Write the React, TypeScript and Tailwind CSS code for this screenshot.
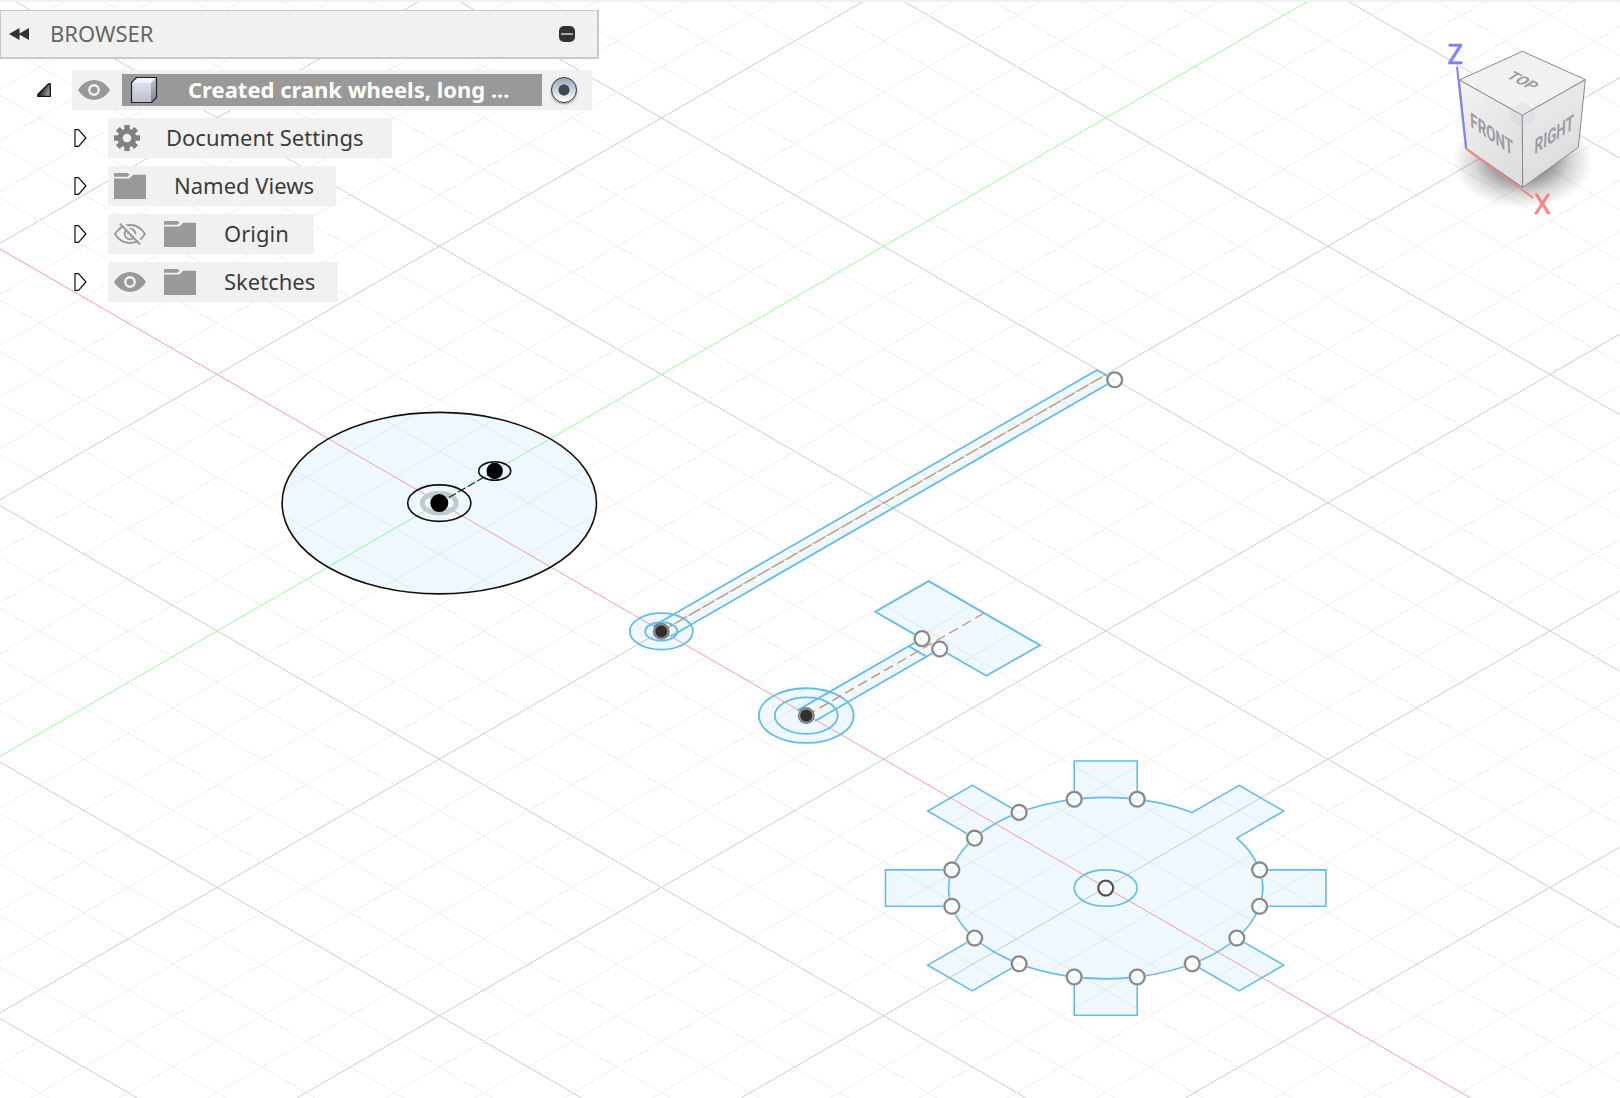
import type { ReactNode } from "react";

const S = Math.tan(Math.PI / 6);
const ORIGIN = { x: 439.3, y: 501.7 };
const STEP = 51.3;

/* ---------- sketch canvas ---------- */

function Grid() {
  const lines: ReactNode[] = [];
  for (let k = -50; k <= 50; k++) {
    if (k === 0) continue;
    for (const dir of [1, -1]) {
      const c = ORIGIN.y + k * STEP - dir * S * ORIGIN.x;
      lines.push(
        <line
          key={`${k}:${dir}`}
          x1={-10}
          y1={c - dir * S * 10}
          x2={3000}
          y2={c + dir * S * 3000}
          stroke={k % 5 === 0 ? "#cbcbcb" : "#efefef"}
        />,
      );
    }
  }
  return <g strokeWidth={1}>{lines}</g>;
}

function Axis({ dir, color }: { dir: 1 | -1; color: string }) {
  const at = (x: number) => ORIGIN.y + dir * S * (x - ORIGIN.x);
  return <line x1={-10} y1={at(-10)} x2={3000} y2={at(3000)} stroke={color} strokeWidth={1} />;
}

function Iso({ x, y, r, ...rest }: { x: number; y: number; r: number; stroke?: string; fill?: string; strokeWidth?: number }) {
  return <ellipse cx={x} cy={y} rx={r} ry={r * S} {...rest} />;
}

const FILL = "rgba(90,185,245,0.095)";
const EDGE = "#62bde8";
const DASH = "#d08a58";

function OpenPoint({ x, y, color = "#858585" }: { x: number; y: number; color?: string }) {
  return (
    <g>
      <circle cx={x} cy={y} r={7.6} fill="rgba(255,255,255,0.85)" stroke="#c4c4c4" strokeWidth={2.6} />
      <circle cx={x} cy={y} r={7.4} fill="none" stroke={color} strokeWidth={1.8} />
    </g>
  );
}

function FixedPoint({ x, y }: { x: number; y: number }) {
  return (
    <g>
      <circle cx={x} cy={y} r={8.4} fill="#6e6e6e" />
      <circle cx={x} cy={y} r={7} fill="none" stroke="#9b9b9b" strokeWidth={1} />
      <circle cx={x} cy={y} r={5.8} fill="#303030" />
    </g>
  );
}

const GC = { x: 1105.7, y: 887.1 };
const GR = 157.1;
const GL = 220.2;
const GW = 31.5;
const GI = Math.sqrt(GR * GR - GW * GW);

function gearPoint(deg: number, along: number, across: number) {
  const a = (deg * Math.PI) / 180;
  return {
    x: GC.x + along * Math.cos(a) - across * Math.sin(a),
    y: GC.y + S * (along * Math.sin(a) + across * Math.cos(a)),
  };
}

const pt = (p: { x: number; y: number }) => `${p.x.toFixed(2)} ${p.y.toFixed(2)}`;

function GearWheel() {
  const teeth = [0, 45, 90, 135, 180, 225, 270];
  const a = gearPoint(315, GI, -GW);
  const b = gearPoint(315, GI, GW);
  const body = `M${pt(b)}A${GR} ${GR * S} 0 1 1 ${pt(a)}L${pt(gearPoint(315, GL, -GW))}L${pt(gearPoint(315, GL, GW))}Z`;
  return (
    <g>
      <path d={body} fill={FILL} stroke={EDGE} strokeWidth={1.6} />
      <Iso x={GC.x} y={GC.y} r={31.5} fill="none" stroke={EDGE} strokeWidth={1.6} />
      {teeth.map((t) => {
        const p = gearPoint(t, GI, -GW);
        const q = gearPoint(t, GI, GW);
        const p2 = gearPoint(t, GL, -GW);
        const q2 = gearPoint(t, GL, GW);
        return (
          <g key={t}>
            <path d={`M${pt(p)}L${pt(p2)}L${pt(q2)}L${pt(q)}A${GR} ${GR * S} 0 0 0 ${pt(p)}Z`} fill={FILL} />
            <path d={`M${pt(p)}L${pt(p2)}L${pt(q2)}L${pt(q)}`} fill="none" stroke={EDGE} strokeWidth={1.6} />
          </g>
        );
      })}
      {teeth.map((t) => (
        <g key={t}>
          <OpenPoint {...gearPoint(t, GI, -GW)} />
          <OpenPoint {...gearPoint(t, GI, GW)} />
        </g>
      ))}
      <OpenPoint x={GC.x} y={GC.y} color="#484848" />
    </g>
  );
}

function Sketches() {
  return (
    <g>
      {/* crank wheel */}
      <Iso x={439.3} y={502.1} r={157.2} fill={FILL} stroke="#111" strokeWidth={1.6} />
      <Iso x={439.3} y={502.1} r={17} fill="none" stroke="#c3cacd" strokeWidth={5} />
      <line x1={439.3} y1={502} x2={494.7} y2={470} stroke="#123" strokeWidth={1.1} strokeDasharray="8 3" />
      <Iso x={439.3} y={502.1} r={31.6} fill="none" stroke="#111" strokeWidth={1.6} />
      <Iso x={494.7} y={470} r={16} fill="none" stroke="#111" strokeWidth={1.6} />
      <circle cx={439.3} cy={502.1} r={9} />
      <circle cx={494.7} cy={470} r={8.2} />

      {/* long arm */}
      <Iso x={661.3} y={630.4} r={31.5} fill={FILL} />
      <path d="M678 615.4L1097 369L1114.7 379L690 624Z" fill={FILL} />
      <g fill="none" stroke={EDGE} strokeWidth={1.8}>
        <Iso x={661.3} y={630.4} r={31.5} />
        <Iso x={661.3} y={630.4} r={16} />
        <path d="M653 625.2L1097 369L1114.7 379L671 635.2" />
      </g>
      <path d="M661.3 630.4L1105.7 374" stroke={DASH} strokeWidth={1.2} strokeDasharray="13 3" />
      <FixedPoint x={661.3} y={630.4} />
      <OpenPoint x={1114.7} y={378.8} />

      {/* short arm */}
      <Iso x={806.3} y={714.6} r={47.4} fill={FILL} />
      <path d="M837 688L922 637.6L939.7 648L847 702Z" fill={FILL} />
      <path d="M928.7 580.1L875.3 610.8L986.3 674.8L1040 644.3Z" fill={FILL} />
      <g fill="none" stroke={EDGE} strokeWidth={1.8}>
        <Iso x={806.3} y={714.6} r={47.4} />
        <Iso x={806.3} y={714.6} r={31.5} />
        <path d="M797.4 709.4L922 637.6L875.3 610.8L928.7 580.1L1040 644.3L986.3 674.8L939.7 648L815 720" />
        <path d="M909 645.4L926.7 655.8" />
      </g>
      <path d="M806.3 714.6L983.7 612.3" stroke={DASH} strokeWidth={1.2} strokeDasharray="10 5" />
      <FixedPoint x={806.3} y={714.6} />
      <OpenPoint x={922} y={637.6} />
      <OpenPoint x={939.7} y={648} />

      <GearWheel />
    </g>
  );
}

/* ---------- view cube ---------- */

function ViewCube() {
  return (
    <svg viewBox="0 0 600 630" className="h-[210px] w-[200px] shrink-0" role="img" aria-label="View cube">
      <defs>
        <radialGradient id="cubeShadow">
          <stop offset="0.4" stopColor="#000" stopOpacity="0.4" />
          <stop offset="0.7" stopColor="#000" stopOpacity="0.15" />
          <stop offset="1" stopColor="#000" stopOpacity="0" />
        </radialGradient>
        <linearGradient id="cubeFront" x1="0" y1="0" x2="0.6" y2="1">
          <stop offset="0" stopColor="#f3f3f3" />
          <stop offset="1" stopColor="#dedede" />
        </linearGradient>
        <linearGradient id="cubeRight" x1="0" y1="0" x2="0.4" y2="1">
          <stop offset="0" stopColor="#f0f0f0" />
          <stop offset="1" stopColor="#dadada" />
        </linearGradient>
      </defs>
      <ellipse cx="308" cy="425" rx="212" ry="140" fill="url(#cubeShadow)" />
      <g stroke="#8a8a8a" strokeWidth="3" strokeLinejoin="round">
        <path d="M307 94L118 180L307 286L496 179Z" fill="#f1f1f1" />
        <path d="M118 180L307 286L308 502L140 386Z" fill="url(#cubeFront)" />
        <path d="M496 179L307 286L308 502L475 382Z" fill="url(#cubeRight)" />
      </g>
      <path d="M307 246L345 266V302L307 324L271 302V266Z" fill="#b9c2d4" fillOpacity="0.22" />
      <path d="M111 140L138 386" stroke="#8080ff" strokeWidth="6" />
      <path d="M138 386L340 534" stroke="#f08585" strokeWidth="6" />
      <g className="font-[Roboto,sans-serif] font-bold" fill="#9a9da3" textAnchor="middle" fontSize="24">
        <text transform="matrix(1.7 0.87 -1.6 1.1 295 191)">TOP</text>
        <text transform="matrix(1.68 1.16 0.1 2.6 216 364)">FRONT</text>
        <text transform="matrix(1.68 -1.1 -0.1 2.6 402 364)">RIGHT</text>
      </g>
      <g className="font-['Noto_Sans',sans-serif]" textAnchor="middle" fontSize="81" strokeWidth="2">
        <text x="106" y="131" fill="#8080ff" stroke="#8080ff">Z</text>
        <text x="367" y="583" fill="#ff8080" stroke="#ff8080">X</text>
      </g>
    </svg>
  );
}

/* ---------- icons ---------- */

function EyeIcon() {
  return (
    <svg viewBox="0 0 32 20" className="h-5 w-8">
      <path d="M0 10C4 3.5 10 0 16 0s12 3.5 16 10c-4 6.5-10 10-16 10S4 16.5 0 10Z" fill="#999" />
      <circle cx="16" cy="10" r="4.7" fill="#999" stroke="#f1f1f1" strokeWidth="2.4" />
    </svg>
  );
}

function EyeOffIcon() {
  return (
    <svg viewBox="0 0 32 22" className="h-[22px] w-8" fill="none" stroke="#999" strokeWidth="1.8">
      <path d="M1 11C5 4.5 10.5 2 16 2s11 2.5 15 9c-4 6.5-9.500 9-15 9S5 17.5 1 11Z" />
      <circle cx="16" cy="11" r="5.3" />
      <path d="M14 11a2 2 0 0 1 2-2M18 11a2 2 0 0 1-2 2" />
      <path d="M7.5 -1L28 20" stroke="#f1f1f1" strokeWidth="2.5" />
      <path d="M5.7 0.5L26 21.5" />
    </svg>
  );
}

function FolderIcon() {
  return (
    <svg viewBox="0 0 32 26" className="h-[26px] w-8" fill="#999">
      <path d="M0 0H13.5L15.5 1.5L13.5 3.7H0Z" />
      <path d="M0 5.5H15.5L19 1.7H32V26H0Z" />
    </svg>
  );
}

function GearIcon() {
  return (
    <svg viewBox="-13 -13 26 26" className="size-[26px]" fill="#808080">
      {[0, 45, 90, 135].map((a) => (
        <rect key={a} x="-2.7" y="-13" width="5.4" height="26" transform={`rotate(${a})`} />
      ))}
      <circle r="9.3" />
      <circle r="4.3" fill="#f1f1f1" />
    </svg>
  );
}

function ComponentIcon() {
  return (
    <svg viewBox="0 0 28 28" className="size-7">
      <defs>
        <linearGradient id="cubeFace" x1="0" y1="0" x2="0" y2="1">
          <stop offset="0" stopColor="#dfe1e8" />
          <stop offset="1" stopColor="#b9bdcb" />
        </linearGradient>
        <linearGradient id="cubeSide" x1="0" y1="0" x2="0" y2="1">
          <stop offset="0" stopColor="#c3c7d2" />
          <stop offset="1" stopColor="#7f8596" />
        </linearGradient>
      </defs>
      <path d="M2 6.5L7 1.5H26.5V21L21 26.5H2Z" fill="#f2f3f6" />
      <path d="M2 7H21V26.5H2Z" fill="url(#cubeFace)" />
      <path d="M21 7L26.5 1.5V21L21 26.5Z" fill="url(#cubeSide)" />
      <path d="M1.5 6.5L6.5 1.5H26.5V21.5L21.5 26.5H1.5Z" fill="none" stroke="#222" strokeWidth="1.2" strokeLinejoin="round" />
    </svg>
  );
}

function CollapsedIcon() {
  return (
    <svg viewBox="0 0 14 18" className="h-[18px] w-3.5">
      <path d="M1 0.7H4.5L12 9L4.5 17.3H1Z" fill="#fff" stroke="#111" strokeWidth="1.2" />
    </svg>
  );
}

function ExpandedIcon() {
  return (
    <svg viewBox="0 0 14 14" className="size-3.5">
      <defs>
        <linearGradient id="expand" x1="0" y1="0" x2="1" y2="0.4">
          <stop offset="0.3" stopColor="#111" />
          <stop offset="1" stopColor="#999" />
        </linearGradient>
      </defs>
      <path d="M0.8 13.3V11.5L11.5 0.8H13.3V13.3Z" fill="url(#expand)" stroke="#111" strokeWidth="1.3" />
    </svg>
  );
}

/* ---------- browser panel ---------- */

function Row({ label, children, gap, width }: { label: string; children: ReactNode; gap: string; width: string }) {
  return (
    <li className="flex h-10 items-center">
      <button type="button" aria-label={`Expand ${label}`} className="mr-5 flex w-3.5 shrink-0">
        <CollapsedIcon />
      </button>
      <div className={`flex h-10 items-center bg-[#f1f1f1] pl-1.5 ${width}`}>
        {children}
        <span className={`pb-0.5 whitespace-nowrap ${gap}`}>{label}</span>
      </div>
    </li>
  );
}

function BrowserPanel() {
  return (
    <section className="w-[600px] max-w-full pt-2" aria-label="Browser">
      <header className="mr-px flex h-[49px] items-center border-t border-r-2 border-b-2 border-l border-[#c9c9c9] bg-[#f1f1f1] pr-[22px] pl-2">
        <button type="button" aria-label="Collapse browser">
          <svg viewBox="0 0 20 12" className="h-3 w-5" fill="#333">
            <path d="M0 6L10.5 0V12ZM9.5 6L20 0V12Z" />
          </svg>
        </button>
        <h1 className="ml-[21px] flex-1 pb-0.5 text-[22px] leading-none text-[#666]">BROWSER</h1>
        <button type="button" aria-label="Hide browser" className="flex size-4 items-center justify-center rounded-[5px] bg-[#333]">
          <span className="h-0.5 w-3 bg-[#aaa]" />
        </button>
      </header>

      <ul className="mt-[11px] flex flex-col gap-2 pl-[37px] text-[22px] leading-none text-[#3c3c3c]">
        <li className="flex h-10 items-center">
          <button type="button" aria-label="Collapse document" className="mr-[21px] flex shrink-0">
            <ExpandedIcon />
          </button>
          <div className="flex h-10 w-[520px] items-center bg-[#f1f1f1] pl-1.5">
            <button type="button" aria-label="Hide document" className="shrink-0">
              <EyeIcon />
            </button>
            <div className="ml-3 flex h-8 w-[420px] items-center bg-[#999] pl-2">
              <ComponentIcon />
              <span className="ml-[30px] pb-0.5 whitespace-nowrap font-bold text-white">Created crank wheels, long ...</span>
            </div>
            <input
              type="radio"
              name="active"
              defaultChecked
              aria-label="Activate document"
              className="ml-[9px] size-[26px] appearance-none rounded-full border border-[#333] bg-[radial-gradient(circle,#44474d_0_5px,transparent_6px),linear-gradient(#9ba6bd,#ffffff)] shadow-[0_1px_2px_rgba(0,0,0,0.4)]"
            />
          </div>
        </li>
        <li>
          <ul className="flex flex-col gap-2 pl-[37px]">
            <Row label="Document Settings" gap="ml-[26px]" width="w-[284px]">
              <GearIcon />
            </Row>
            <Row label="Named Views" gap="ml-7" width="w-[228px]">
              <FolderIcon />
            </Row>
            <Row label="Origin" gap="ml-7" width="w-[206px]">
              <button type="button" aria-label="Show Origin" className="mr-[18px]">
                <EyeOffIcon />
              </button>
              <FolderIcon />
            </Row>
            <Row label="Sketches" gap="ml-7" width="w-[230px]">
              <button type="button" aria-label="Hide Sketches" className="mr-[18px]">
                <EyeIcon />
              </button>
              <FolderIcon />
            </Row>
          </ul>
        </li>
      </ul>
    </section>
  );
}

export default function App() {
  return (
    <main className="relative min-h-screen overflow-hidden border-t-2 border-[#f1f1f1] bg-white font-['Noto_Sans',sans-serif]">
      <svg className="absolute inset-x-0 -top-px h-screen w-full" role="img" aria-label="Sketch canvas">
        <Grid />
        <Axis dir={1} color="#ff9c9c" />
        <Axis dir={-1} color="#98fb98" />
        <Sketches />
      </svg>
      <div className="relative flex items-start justify-between">
        <BrowserPanel />
        <div className="pt-[18px]">
          <ViewCube />
        </div>
      </div>
    </main>
  );
}
